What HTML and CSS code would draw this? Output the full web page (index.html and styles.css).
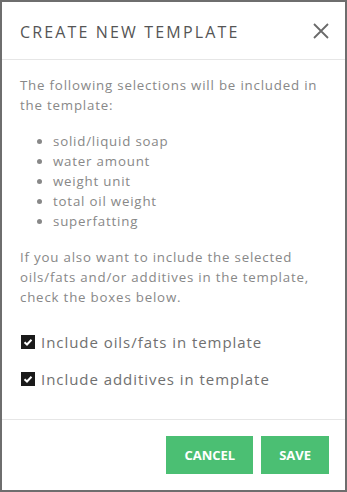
FILE: index.html
```html
<!DOCTYPE html>
<html lang="en">
<head>
<meta charset="utf-8">
<title>Create new template</title>
<link rel="stylesheet" href="styles.css">
</head>
<body>
<div class="modal">
  <div class="modal-header">
    <h5 class="modal-title">CREATE NEW TEMPLATE</h5>
    <button class="close" type="button" aria-label="Close">
      <svg width="16" height="16" viewBox="0 0 16 16"><path d="M1 1L15 15M15 1L1 15" stroke="#6a6a6a" stroke-width="1.8" fill="none"/></svg>
    </button>
  </div>
  <div class="modal-body">
    <p class="text">The following selections will be included in the template:</p>
    <ul class="list">
      <li>solid/liquid soap</li>
      <li>water amount</li>
      <li>weight unit</li>
      <li>total oil weight</li>
      <li>superfatting</li>
    </ul>
    <p class="text text-last">If you also want to include the selected oils/fats and/or additives in the template, check the boxes below.</p>
    <div class="checks">
      <label class="check"><span class="box"><svg width="14" height="14" viewBox="0 0 14 14"><path d="M3.5 7.2L6 9.5L10.5 4.8" stroke="#fff" stroke-width="2" fill="none"/></svg></span>Include oils/fats in template</label>
      <label class="check"><span class="box"><svg width="14" height="14" viewBox="0 0 14 14"><path d="M3.5 7.2L6 9.5L10.5 4.8" stroke="#fff" stroke-width="2" fill="none"/></svg></span>Include additives in template</label>
    </div>
  </div>
  <div class="modal-footer">
    <button class="btn" type="button">CANCEL</button>
    <button class="btn" type="button">SAVE</button>
  </div>
</div>
</body>
</html>
```
FILE: styles.css
```css
* { box-sizing: border-box; }
html, body { margin: 0; padding: 0; background: #fff; }
body { font-family: "Open Sans", "Noto Sans", sans-serif; color: #888; }
.modal {
  width: 347px;
  height: 492px;
  border: 2px solid #6e6e6e;
  background: #fff;
  display: flex;
  flex-direction: column;
}
.modal-header {
  height: 58px;
  padding: 0 16px 0 18px;
  border-bottom: 1px solid #e6e6e6;
  display: flex;
  align-items: center;
  justify-content: space-between;
}
.modal-title {
  margin: 0;
  font-size: 16px;
  font-weight: 400;
  letter-spacing: 2.15px;
  color: #555;
  line-height: 24px;
  padding-top: 2px;
}
.close {
  border: 0;
  background: none;
  padding: 0;
  margin: 0;
  width: 16px;
  height: 16px;
  display: flex;
}
.modal-body {
  flex: 1;
  padding: 15px 16px 0 18px;
}
.text {
  margin: 0 0 16px;
  font-size: 13.3px;
  line-height: 20px;
  letter-spacing: 0.8px;
}
.text-last { margin-bottom: 23px; }
.list {
  margin: 0 0 16px;
  padding-left: 33px;
  font-size: 13.3px;
  line-height: 20px;
  letter-spacing: 0.8px;
}
.checks {
  display: flex;
  flex-direction: column;
  gap: 13px;
}
.check {
  display: flex;
  align-items: center;
  height: 24px;
  font-size: 15px;
  letter-spacing: 0.95px;
  color: #707070;
}
.box {
  width: 14px;
  height: 14px;
  background: #1a1a1a;
  margin-left: 1px;
  margin-right: 6px;
  display: flex;
}
.modal-footer {
  height: 71px;
  border-top: 1px solid #e6e6e6;
  padding: 16px 16px 0;
  display: flex;
  justify-content: flex-end;
  align-items: flex-start;
  gap: 8px;
}
.btn {
  height: 38px;
  border: 0;
  border-radius: 0;
  background: #4bbf73;
  color: #fff;
  font-family: "Open Sans", "Noto Sans", sans-serif;
  font-weight: 700;
  font-size: 13px;
  padding: 0 18px;
}
```
